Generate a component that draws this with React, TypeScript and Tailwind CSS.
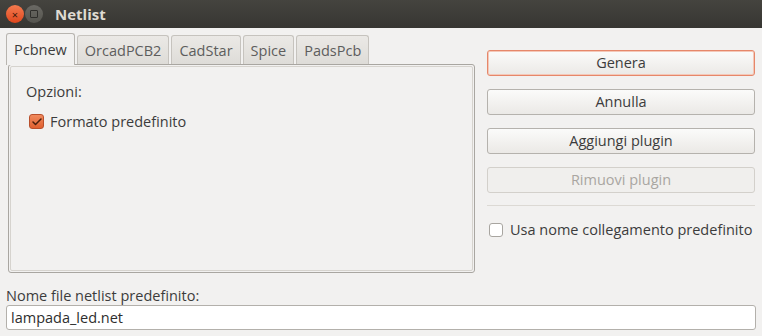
import { Check } from 'lucide-react';

const tabs = ['Pcbnew', 'OrcadPCB2', 'CadStar', 'Spice', 'PadsPcb'];

const Button = ({ label, primary, disabled }: { label: string; primary?: boolean; disabled?: boolean }) => (
  <button
    className={
      'h-[26px] w-full rounded-[3px] border leading-none ' +
      (disabled
        ? 'border-[#d3d0cb] bg-[#f0efed] text-[#a9a6a1]'
        : primary
          ? 'border-[#e6876a] bg-gradient-to-b from-[#fbfbfa] to-[#ebe9e6] text-[#3c3c3c] shadow-[inset_0_0_0_1px_#f4c8b8]'
          : 'border-[#b5b2ad] bg-gradient-to-b from-[#fbfbfa] to-[#ebe9e6] text-[#3c3c3c]')
    }
  >
    {label}
  </button>
);

const App = () => {
  return (
    <div className="flex h-[336px] w-[762px] flex-col bg-[#f2f1f0] font-['Open_Sans',sans-serif] text-[14.5px] text-[#3c3c3c]">
      {/* title bar */}
      <div className="flex h-[28px] items-center bg-gradient-to-b from-[#45443f] to-[#373632] pl-[6px]">
        <div className="flex h-[18px] w-[18px] items-center justify-center rounded-full bg-gradient-to-b from-[#f37a4e] to-[#e0461b] text-[11px] leading-none text-[#3a1a0c]">
          ×
        </div>
        <div className="ml-[1px] flex h-[18px] w-[18px] items-center justify-center rounded-full bg-gradient-to-b from-[#6a6964] to-[#56554f]">
          <div className="h-[8px] w-[8px] rounded-[1px] border border-[#2f2e2b]" />
        </div>
        <span className="ml-[12px] text-[15px] font-bold text-[#dfdbd2]">Netlist</span>
      </div>

      <div className="flex flex-1 px-[6px]">
        {/* left: notebook */}
        <div className="flex w-[469px] flex-col pt-[5px]">
          <div className="flex items-end gap-[2px]">
            {tabs.map((t, i) =>
              i === 0 ? (
                <div
                  key={t}
                  className="relative z-10 -mb-px flex h-[32px] items-center rounded-t-[3px] border border-b-0 border-[#b8b5b0] bg-[#f2f1f0] px-[7px] pt-[1px]"
                >
                  {t}
                </div>
              ) : (
                <div
                  key={t}
                  className="flex h-[29px] items-center rounded-t-[3px] border border-b-0 border-[#c6c3be] bg-gradient-to-b from-[#ebe9e6] to-[#dedcd8] px-[7px] pt-[1px] text-[#5d5d5d]"
                >
                  {t}
                </div>
              )
            )}
          </div>
          <div className="ml-[2px] h-[209px] rounded-[3px] border border-[#a9a6a1] p-px">
            <div className="h-full rounded-[2px] border border-[#d6d3ce] px-[15px] pt-[14px]">
              <div>Opzioni:</div>
              <div className="mt-[8px] flex items-center gap-[6px] pl-[3px]">
                <div className="flex h-[15px] w-[15px] items-center justify-center rounded-[3px] border border-[#b9502c] bg-gradient-to-b from-[#f08a5d] to-[#e0602f]">
                  <Check size={12} strokeWidth={3} className="text-[#4a1f0d]" />
                </div>
                <span>Formato predefinito</span>
              </div>
            </div>
          </div>
        </div>

        {/* right: buttons */}
        <div className="ml-[12px] flex flex-1 flex-col pt-[22px] pr-[1px]">
          <div className="flex flex-col gap-[13px]">
            <Button label="Genera" primary />
            <Button label="Annulla" />
            <Button label="Aggiungi plugin" />
            <Button label="Rimuovi plugin" disabled />
          </div>
          <div className="mt-[12px] h-px bg-[#dcd9d4]" />
          <label className="mt-[13px] flex items-center gap-[7px] pl-[2px]">
            <span className="h-[14px] w-[14px] rounded-[3px] border border-[#a8a5a0] bg-white" />
            <span>Usa nome collegamento predefinito</span>
          </label>
        </div>
      </div>

      {/* bottom */}
      <div className="px-[6px] pb-[6px]">
        <div className="leading-[18px]">Nome file netlist predefinito:</div>
        <div className="flex h-[25px] items-center rounded-[3px] border border-[#b3b0ab] bg-white px-[4px] text-[#2e2e2e]">
          lampada_led.net
        </div>
      </div>
    </div>
  );
};

export default App;
